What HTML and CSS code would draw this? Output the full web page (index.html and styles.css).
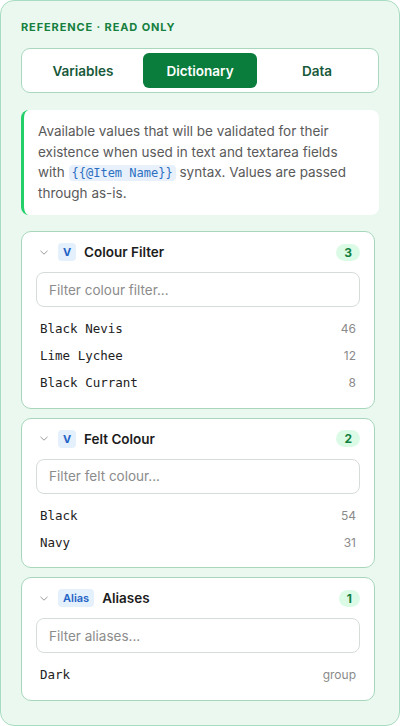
FILE: index.html
```html
<!DOCTYPE html>
<html>
<head>
<meta charset="utf-8">
<link rel="stylesheet" href="styles.css">
</head>
<body>
<div class="panel">
  <div class="label">Reference · Read only</div>
  <div class="tabs">
    <div class="tab">Variables</div>
    <div class="tab active">Dictionary</div>
    <div class="tab">Data</div>
  </div>
  <div class="info">Available values that will be validated for their existence when used in text and textarea fields with <code class="chip">{{@Item Name}}</code> syntax. Values are passed through as-is.</div>
  <div class="cards">
    <div class="card">
      <div class="head">
        <svg class="chev" width="8" height="5" viewBox="0 0 8 5"><path d="M0.5 0.8 L4 4.2 L7.5 0.8" fill="none" stroke="#9b9b9b" stroke-width="1"/></svg>
        <span class="tag">V</span>
        <span class="title">Colour Filter</span>
        <span class="count">3</span>
      </div>
      <div class="input">Filter colour filter...</div>
      <div class="rows">
        <div class="row"><span class="name">Black Nevis</span><span class="num">46</span></div>
        <div class="row"><span class="name">Lime Lychee</span><span class="num">12</span></div>
        <div class="row"><span class="name">Black Currant</span><span class="num">8</span></div>
      </div>
    </div>
    <div class="card">
      <div class="head">
        <svg class="chev" width="8" height="5" viewBox="0 0 8 5"><path d="M0.5 0.8 L4 4.2 L7.5 0.8" fill="none" stroke="#9b9b9b" stroke-width="1"/></svg>
        <span class="tag">V</span>
        <span class="title">Felt Colour</span>
        <span class="count">2</span>
      </div>
      <div class="input">Filter felt colour...</div>
      <div class="rows">
        <div class="row"><span class="name">Black</span><span class="num">54</span></div>
        <div class="row"><span class="name">Navy</span><span class="num">31</span></div>
      </div>
    </div>
    <div class="card">
      <div class="head">
        <svg class="chev" width="8" height="5" viewBox="0 0 8 5"><path d="M0.5 0.8 L4 4.2 L7.5 0.8" fill="none" stroke="#9b9b9b" stroke-width="1"/></svg>
        <span class="tag alias">Alias</span>
        <span class="title">Aliases</span>
        <span class="count">1</span>
      </div>
      <div class="input">Filter aliases...</div>
      <div class="rows">
        <div class="row"><span class="name">Dark</span><span class="num">group</span></div>
      </div>
    </div>
  </div>
</div>
</body>
</html>
```
FILE: styles.css
```css
* { box-sizing: border-box; }
html, body { margin: 0; padding: 0; background: #ffffff; }
body { font-family: Inter, "Noto Sans", sans-serif; }

.panel {
  width: 400px;
  height: 726px;
  background: #eaf8f0;
  border: 1px solid #a9dbc0;
  border-radius: 14px;
  padding: 19px 20px;
  overflow: hidden;
}

.label {
  font-size: 11px;
  line-height: 14px;
  font-weight: 700;
  letter-spacing: 0.08em;
  text-transform: uppercase;
  color: #16803e;
}

.tabs {
  margin-top: 14px;
  display: grid;
  grid-template-columns: 1fr 1fr 1fr;
  gap: 3px;
  padding: 4px;
  background: #ffffff;
  border: 1px solid #a9d8be;
  border-radius: 9px;
}
.tab {
  height: 35px;
  display: flex;
  align-items: center;
  justify-content: center;
  font-size: 13.5px;
  font-weight: 600;
  color: #17593a;
  border-radius: 6px;
}
.tab.active {
  background: #0a7d3c;
  color: #ffffff;
}

.info {
  margin-top: 17px;
  background: #ffffff;
  border-left: 3px solid #22cf68;
  border-radius: 8px;
  padding: 11px 14px 12px 14px;
  font-size: 13.5px;
  line-height: 20.5px;
  color: #5a5a5a;
}
.chip {
  font-family: "DejaVu Sans Mono", monospace;
  font-size: 12px;
  line-height: 16px;
  display: inline-block;
  color: #2b6fc2;
  background: #e8f1fb;
  border-radius: 4px;
  padding: 0 3px;
}

.cards {
  margin-top: 16px;
  padding-right: 4px;
  display: flex;
  flex-direction: column;
  gap: 9px;
}
.card {
  background: #ffffff;
  border: 1px solid #a6d7ba;
  border-radius: 10px;
  padding: 8px 14px 11.5px 14px;
}
.head {
  height: 24px;
  display: flex;
  align-items: center;
  padding-left: 4px;
}
.chev { flex: none; margin-right: 10px; }
.tag {
  height: 18px;
  min-width: 18px;
  display: flex;
  align-items: center;
  justify-content: center;
  background: #e4f0fc;
  color: #1f63c6;
  font-size: 11px;
  font-weight: 700;
  border-radius: 4px;
  padding: 0 4px;
  margin-right: 8px;
}
.tag.alias { font-weight: 600; padding: 0 5px; }
.title {
  font-size: 13.5px;
  font-weight: 600;
  color: #1c1c1c;
  flex: 1;
}
.count {
  background: #dcfbe6;
  color: #138040;
  font-size: 12px;
  font-weight: 700;
  line-height: 17px;
  padding: 0 8px;
  border-radius: 9px;
}

.input {
  margin-top: 8px;
  height: 35px;
  border: 1px solid #d6ddd9;
  border-radius: 8px;
  padding: 0 12px;
  display: flex;
  align-items: center;
  font-size: 13.5px;
  color: #8c8c8c;
}

.rows { margin-top: 8px; }
.row {
  height: 27px;
  display: flex;
  align-items: center;
  justify-content: space-between;
  padding: 0 4px;
}
.name {
  font-family: "DejaVu Sans Mono", monospace;
  font-size: 12.5px;
  color: #222222;
}
.num {
  font-size: 12px;
  color: #8a8a8a;
}
```
